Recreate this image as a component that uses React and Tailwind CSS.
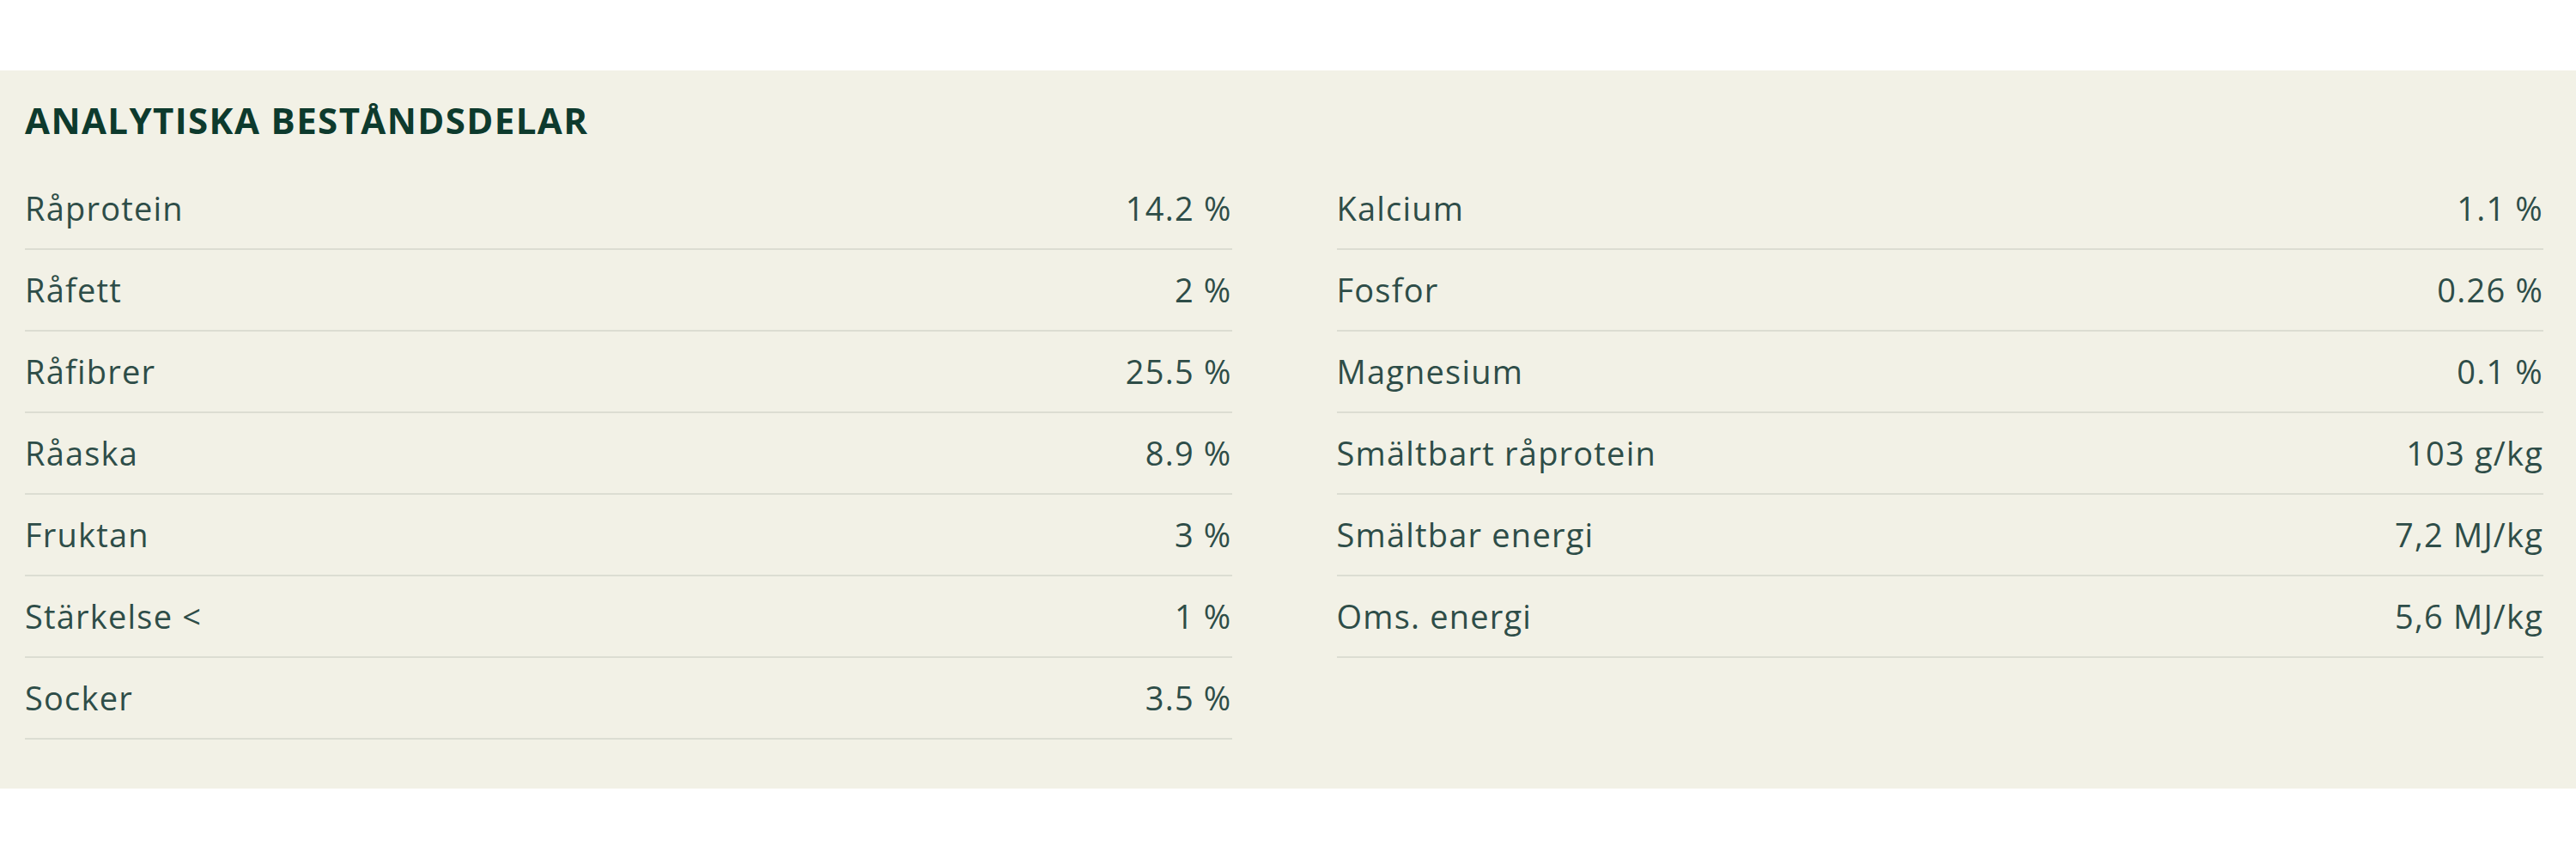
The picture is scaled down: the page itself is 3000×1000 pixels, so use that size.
import React from "react";

const left = [
	["Råprotein", "14.2 %"],
	["Råfett", "2 %"],
	["Råfibrer", "25.5 %"],
	["Råaska", "8.9 %"],
	["Fruktan", "3 %"],
	["Stärkelse <", "1 %"],
	["Socker", "3.5 %"],
];

const right = [
	["Kalcium", "1.1 %"],
	["Fosfor", "0.26 %"],
	["Magnesium", "0.1 %"],
	["Smältbart råprotein", "103 g/kg"],
	["Smältbar energi", "7,2 MJ/kg"],
	["Oms. energi", "5,6 MJ/kg"],
];

const Row = ({ label, value }) => (
	<div className="flex h-[95px] items-center justify-between border-b-2 border-[#dcddd2]">
		<span>{label}</span>
		<span>{value}</span>
	</div>
);

const App = () => {
	return (
		<div className="min-h-[1000px] bg-white pt-[82px] font-['Open_Sans','Noto_Sans',sans-serif]">
			<div className="h-[836px] bg-[#f2f1e6] pl-[29px] pr-[38px] pt-[31px]">
				<h2 className="mb-[30px] text-[42px] font-bold leading-[53px] tracking-[1.4px] text-[#0d3a2d]">
					ANALYTISKA BESTÅNDSDELAR
				</h2>
				<div className="grid grid-cols-2 gap-x-[122px] text-[38px] font-normal tracking-[1.2px] text-[#2e4d48]">
					<div>
						{left.map(([l, v]) => (
							<Row key={l} label={l} value={v} />
						))}
					</div>
					<div>
						{right.map(([l, v]) => (
							<Row key={l} label={l} value={v} />
						))}
					</div>
				</div>
			</div>
		</div>
	);
};

export default App;
